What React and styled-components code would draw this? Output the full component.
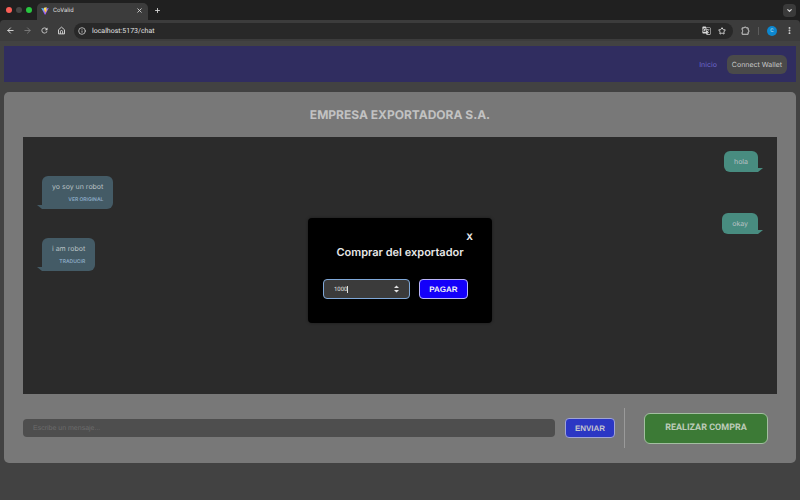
import { useState } from 'react';
import styled, { createGlobalStyle } from 'styled-components';
import {
  ArrowLeft,
  ArrowRight,
  ChevronDown,
  EllipsisVertical,
  Info,
  Plus,
  Star,
  X,
} from 'lucide-react';
import { MdGTranslate, MdRefresh } from 'react-icons/md';

const GlobalStyle = createGlobalStyle`
  * {
    box-sizing: border-box;
  }
  body {
    margin: 0;
    background: #424242;
    color: #bdbdbd;
    font-family: Inter, 'Liberation Sans', sans-serif;
    font-size: 7px;
    text-rendering: geometricPrecision;
  }
  button,
  input {
    margin: 0;
    font-family: inherit;
    text-rendering: inherit;
  }
`;

const Window = styled.div`
  display: flex;
  flex-direction: column;
  min-height: 100vh;
`;

/* browser */
const TabBar = styled.header`
  display: flex;
  align-items: center;
  height: 20px;
  padding: 0 4px 0 6px;
  background: #202020;
  font-family: Roboto, sans-serif;
`;

const Lights = styled.div`
  display: flex;
  gap: 4px;
`;

const Light = styled.span`
  width: 6px;
  height: 6px;
  border-radius: 50%;
  background: ${({ $color }) => $color};
`;

const Tab = styled.div`
  display: flex;
  align-items: center;
  gap: 4px;
  align-self: flex-end;
  width: 111px;
  height: 17px;
  margin: 0 5px;
  padding: 0 5px 2px 4px;
  border-radius: 5px 5px 0 0;
  background: #3c3c3c;
  color: #dedede;
  font-size: 6px;
`;

const TabTitle = styled.span`
  flex: 1;
`;

const IconButton = styled.button`
  display: flex;
  align-items: center;
  justify-content: center;
  width: ${({ $size = 9 }) => $size}px;
  height: ${({ $size = 9 }) => $size}px;
  padding: 0;
  border: none;
  border-radius: 4px;
  background: ${({ $bg = 'transparent' }) => $bg};
  color: ${({ $color = '#d8d8d8' }) => $color};
`;

const TabMenu = styled(IconButton)`
  margin-left: auto;
`;

const ToolbarBack = styled.div`
  background: #202020;
  font-family: Roboto, sans-serif;
`;

const Toolbar = styled.div`
  display: flex;
  align-items: center;
  gap: 8px;
  height: 21px;
  padding: 0 6px;
  border-radius: 4px 4px 0 0;
  background: #3c3c3c;
`;

const AddressBar = styled.div`
  display: flex;
  flex: 1;
  align-items: center;
  gap: 6px;
  height: 16px;
  padding: 0 7px 0 4px;
  border-radius: 8px;
  background: #282828;
`;

const Address = styled.input`
  flex: 1;
  min-width: 0;
  padding: 0;
  border: none;
  outline: none;
  background: transparent;
  color: #e0e0e0;
  font-size: 7px;
`;

const Separator = styled.span`
  width: 1px;
  height: 8px;
  background: #5c5c5c;
`;

const Avatar = styled.button`
  width: 10px;
  height: 10px;
  padding: 0;
  border: none;
  border-radius: 50%;
  background: #0c87cf;
  color: #d5ecf8;
  font-size: 5px;
  line-height: 10px;
`;

/* page */
const Page = styled.div`
  position: relative;
  flex: 1;
  padding: 5px 4px;
`;

const Navbar = styled.nav`
  display: flex;
  align-items: center;
  justify-content: flex-end;
  gap: 10px;
  height: 36px;
  padding: 0 9px;
  background: #302d60;
`;

const NavLink = styled.a`
  color: #6e68cc;
  font-size: 7px;
  text-decoration: none;
`;

const WalletButton = styled.button`
  height: 19px;
  padding: 0 5px;
  border: none;
  border-radius: 6px;
  background: #4a4a4a;
  color: #c8c8c8;
  font-size: 7px;
`;

const Panel = styled.main`
  margin-top: 10px;
  padding: 15px 19px;
  border-radius: 5px;
  background: #787878;
`;

const Title = styled.h1`
  margin: 0 0 14px;
  color: #c2c2c2;
  font-size: 12px;
  font-weight: 700;
  line-height: 16px;
  text-align: center;
`;

const Chat = styled.section`
  display: flex;
  flex-direction: column;
  align-items: flex-start;
  gap: 4px;
  height: 257px;
  padding: 14px 19px;
  background: #2b2b2b;
`;

const Bubble = styled.div`
  position: relative;
  align-self: ${({ $own }) => ($own ? 'flex-end' : 'flex-start')};
  padding: 5px 10px;
  border-radius: ${({ $own }) => ($own ? '6px 6px 0 6px' : '6px 6px 6px 0')};
  background: ${({ $own }) => ($own ? '#488c80' : '#445b66')};
  color: #b9c1c4;

  &::after {
    content: '';
    position: absolute;
    bottom: 0;
    ${({ $own }) => ($own ? 'left: 100%' : 'right: 100%')};
    width: 5px;
    height: 4px;
    background: inherit;
    clip-path: ${({ $own }) =>
      $own
        ? 'polygon(0 0, 100% 0, 0 100%)'
        : 'polygon(0 0, 100% 0, 100% 100%)'};
  }
`;

const BubbleText = styled.p`
  margin: 0;
  font-size: 7px;
  line-height: 11px;
`;

const TranslateButton = styled.button`
  display: block;
  margin: 4px 0 0 auto;
  padding: 0;
  border: none;
  background: transparent;
  color: #8ba9c4;
  font-size: 5px;
  font-weight: 600;
  line-height: 8px;
`;

const Footer = styled.form`
  display: flex;
  align-items: center;
  margin-top: 14px;
  padding-right: 9px;
`;

const MessageInput = styled.input`
  flex: 1;
  min-width: 0;
  height: 18px;
  padding: 0 10px;
  border: none;
  border-radius: 4px;
  background: #4e4e4e;
  color: #bdbdbd;
  font-family: 'Liberation Sans', Arial, sans-serif;
  font-size: 7px;

  &::placeholder {
    color: #6c6c6c;
    opacity: 1;
  }
`;

const ActionButton = styled.button`
  width: ${({ $width }) => $width}px;
  height: ${({ $height = 20 }) => $height}px;
  padding: 0;
  border: 1px solid ${({ $border }) => $border};
  border-radius: ${({ $radius = 4 }) => $radius}px;
  background: ${({ $bg }) => $bg};
  color: ${({ $color = '#c4c4cc' }) => $color};
  font-family: ${({ $family = "'Liberation Sans', Arial" }) => $family},
    sans-serif;
  font-size: ${({ $font = 8 }) => $font}px;
  font-weight: 700;
`;

const SendButton = styled(ActionButton)`
  margin-left: 10px;
`;

const BuyArea = styled.div`
  display: flex;
  align-items: center;
  height: 40px;
  margin-left: 9px;
  padding-left: 19px;
  border-left: 1px solid #9a9a9a;
`;

/* modal */
const Overlay = styled.div`
  position: absolute;
  inset: 0;
  display: flex;
  align-items: center;
  justify-content: center;
`;

const Modal = styled.div`
  display: flex;
  flex-direction: column;
  width: 184px;
  padding: 13px 15px 24px;
  border-radius: 4px;
  background: #000;
  box-shadow: 0 0 3px rgba(0, 0, 0, 0.4);
`;

const CloseButton = styled.button`
  align-self: flex-end;
  margin-right: 4px;
  padding: 0;
  border: none;
  background: transparent;
  color: #ececec;
  font-size: 9px;
  font-weight: 700;
  line-height: 13px;
`;

const ModalTitle = styled.h2`
  margin: 0 0 19px;
  color: #e8e8e8;
  font-size: 11px;
  font-weight: 600;
  line-height: 16px;
  text-align: center;
`;

const PayRow = styled.form`
  display: flex;
  align-items: center;
  gap: 9px;
`;

const AmountField = styled.div`
  display: flex;
  align-items: center;
  width: 87px;
  height: 20px;
  padding: 0 10px;
  border: 1px solid #7fa8d8;
  border-radius: 4px;
  background: #3b3b3b;
`;

const AmountInput = styled.input`
  width: ${({ $chars }) => $chars}ch;
  padding: 0;
  border: none;
  outline: none;
  background: transparent;
  color: #e0e0e0;
  font-family: Roboto, sans-serif;
  font-size: 6px;
  appearance: textfield;

  &::-webkit-inner-spin-button {
    display: none;
  }
`;

const Caret = styled.span`
  width: 1px;
  height: 7px;
  margin-right: auto;
  background: #e0e0e0;
`;

const ViteLogo = () => (
  <svg width="8" height="8" viewBox="0 0 32 32" aria-hidden="true">
    <defs>
      <linearGradient id="shield" x1="0" y1="0" x2="1" y2="1">
        <stop offset="0" stopColor="#41d1ff" />
        <stop offset="0.5" stopColor="#8b6bff" />
        <stop offset="1" stopColor="#bd34fe" />
      </linearGradient>
      <linearGradient id="bolt" x1="0" y1="0" x2="0" y2="1">
        <stop offset="0" stopColor="#ffea83" />
        <stop offset="1" stopColor="#ffa800" />
      </linearGradient>
    </defs>
    <path d="M31 4 17 31c-.3.6-1 .6-1.400 0L1 4l15 3z" fill="url(#shield)" />
    <path d="M23 1 12 3l-.5 12 4-1-1 6 3-1-1 8 8-17-4 1 2.500-10z" fill="url(#bolt)" />
  </svg>
);

const HomeIcon = () => (
  <svg
    width="9"
    height="9"
    viewBox="0 0 24 24"
    fill="none"
    stroke="currentColor"
    strokeWidth="2.500"
    aria-hidden="true"
  >
    <path d="M4 10v11h16V10l-8-7z" />
    <path d="M9 21v-6a3 3 0 0 1 6 0v6" />
  </svg>
);

const ExtensionIcon = () => (
  <svg
    width="9"
    height="9"
    viewBox="0 0 24 24"
    fill="none"
    stroke="currentColor"
    strokeWidth="2.500"
    strokeLinejoin="round"
    aria-hidden="true"
  >
    <path d="M3 5h5.500a2.500 2.500 0 0 1 5 0H19v6a2.500 2.500 0 0 1 0 5v6H3v-6a3 3 0 0 0 0-5.500z" />
  </svg>
);

const StepperIcon = () => (
  <svg width="5" height="8" viewBox="0 0 5 8" aria-hidden="true">
    <path d="M0 3 2.500 0.500 5 3zM0 5h5L2.500 7.500z" fill="#e4e4e4" />
  </svg>
);

const messages = [
  { id: 1, own: true, text: 'hola' },
  { id: 2, text: 'yo soy un robot', action: 'VER ORIGINAL' },
  { id: 3, own: true, text: 'okay' },
  { id: 4, text: 'i am robot', action: 'TRADUCIR' },
];

const BrowserBar = () => (
  <>
    <TabBar>
      <Lights>
        <Light $color="#fb5f57" />
        <Light $color="#464646" />
        <Light $color="#28c840" />
      </Lights>
      <Tab>
        <ViteLogo />
        <TabTitle>CoValid</TabTitle>
        <IconButton $size={7} aria-label="Close tab">
          <X size={7} strokeWidth={3} />
        </IconButton>
      </Tab>
      <IconButton aria-label="New tab">
        <Plus size={7} strokeWidth={3} />
      </IconButton>
      <TabMenu $size={13} $bg="#3a3a3a" aria-label="Search tabs">
        <ChevronDown size={7} strokeWidth={4} />
      </TabMenu>
    </TabBar>
    <ToolbarBack>
      <Toolbar>
        <IconButton aria-label="Back">
          <ArrowLeft size={9} strokeWidth={2.5} />
        </IconButton>
        <IconButton $color="#7c7c7c" aria-label="Forward">
          <ArrowRight size={9} strokeWidth={2.5} />
        </IconButton>
        <IconButton aria-label="Reload">
          <MdRefresh size={9} />
        </IconButton>
        <IconButton aria-label="Home">
          <HomeIcon />
        </IconButton>
        <AddressBar>
          <Info size={8} strokeWidth={2.5} color="#c8c8c8" />
          <Address aria-label="Address" defaultValue="localhost:5173/chat" />
          <IconButton aria-label="Translate page">
            <MdGTranslate size={9} />
          </IconButton>
          <IconButton aria-label="Bookmark">
            <Star size={8} strokeWidth={3} />
          </IconButton>
        </AddressBar>
        <IconButton aria-label="Extensions">
          <ExtensionIcon />
        </IconButton>
        <Separator />
        <Avatar aria-label="Profile">C</Avatar>
        <IconButton aria-label="Menu">
          <EllipsisVertical size={9} strokeWidth={3} />
        </IconButton>
      </Toolbar>
    </ToolbarBack>
  </>
);

const BuyModal = ({ onClose }) => {
  const [amount, setAmount] = useState('1000');

  return (
    <Overlay>
      <Modal role="dialog" aria-labelledby="buy-title">
        <CloseButton aria-label="Cerrar" onClick={onClose}>
          X
        </CloseButton>
        <ModalTitle id="buy-title">Comprar del exportador</ModalTitle>
        <PayRow onSubmit={e => e.preventDefault()}>
          <AmountField>
            <AmountInput
              type="number"
              aria-label="Cantidad"
              value={amount}
              $chars={amount.length}
              onChange={e => setAmount(e.target.value)}
            />
            <Caret />
            <StepperIcon />
          </AmountField>
          <ActionButton
            $width={49}
            $bg="#1400fa"
            $border="#b9b4fa"
            $color="#f2f2f2"
          >
            PAGAR
          </ActionButton>
        </PayRow>
      </Modal>
    </Overlay>
  );
};

const App = () => {
  const [isOpen, setIsOpen] = useState(true);

  return (
    <Window>
      <GlobalStyle />
      <BrowserBar />
      <Page>
        <Navbar>
          <NavLink href="/">Inicio</NavLink>
          <WalletButton>Connect Wallet</WalletButton>
        </Navbar>
        <Panel>
          <Title>EMPRESA EXPORTADORA S.A.</Title>
          <Chat>
            {messages.map(({ id, own, text, action }) => (
              <Bubble key={id} $own={own}>
                <BubbleText>{text}</BubbleText>
                {action && <TranslateButton>{action}</TranslateButton>}
              </Bubble>
            ))}
          </Chat>
          <Footer onSubmit={e => e.preventDefault()}>
            <MessageInput
              aria-label="Mensaje"
              placeholder="Escribe un mensaje..."
            />
            <SendButton $width={50} $bg="#2b36c4" $border="#a0a4d4">
              ENVIAR
            </SendButton>
            <BuyArea>
              <ActionButton
                type="button"
                $width={124}
                $height={31}
                $radius={6}
                $font={9}
                $family="Roboto"
                $bg="#3c7a36"
                $border="#a3bfa1"
                $color="#bccbb9"
                onClick={() => setIsOpen(true)}
              >
                REALIZAR COMPRA
              </ActionButton>
            </BuyArea>
          </Footer>
        </Panel>
        {isOpen && <BuyModal onClose={() => setIsOpen(false)} />}
      </Page>
    </Window>
  );
};

export default App;
